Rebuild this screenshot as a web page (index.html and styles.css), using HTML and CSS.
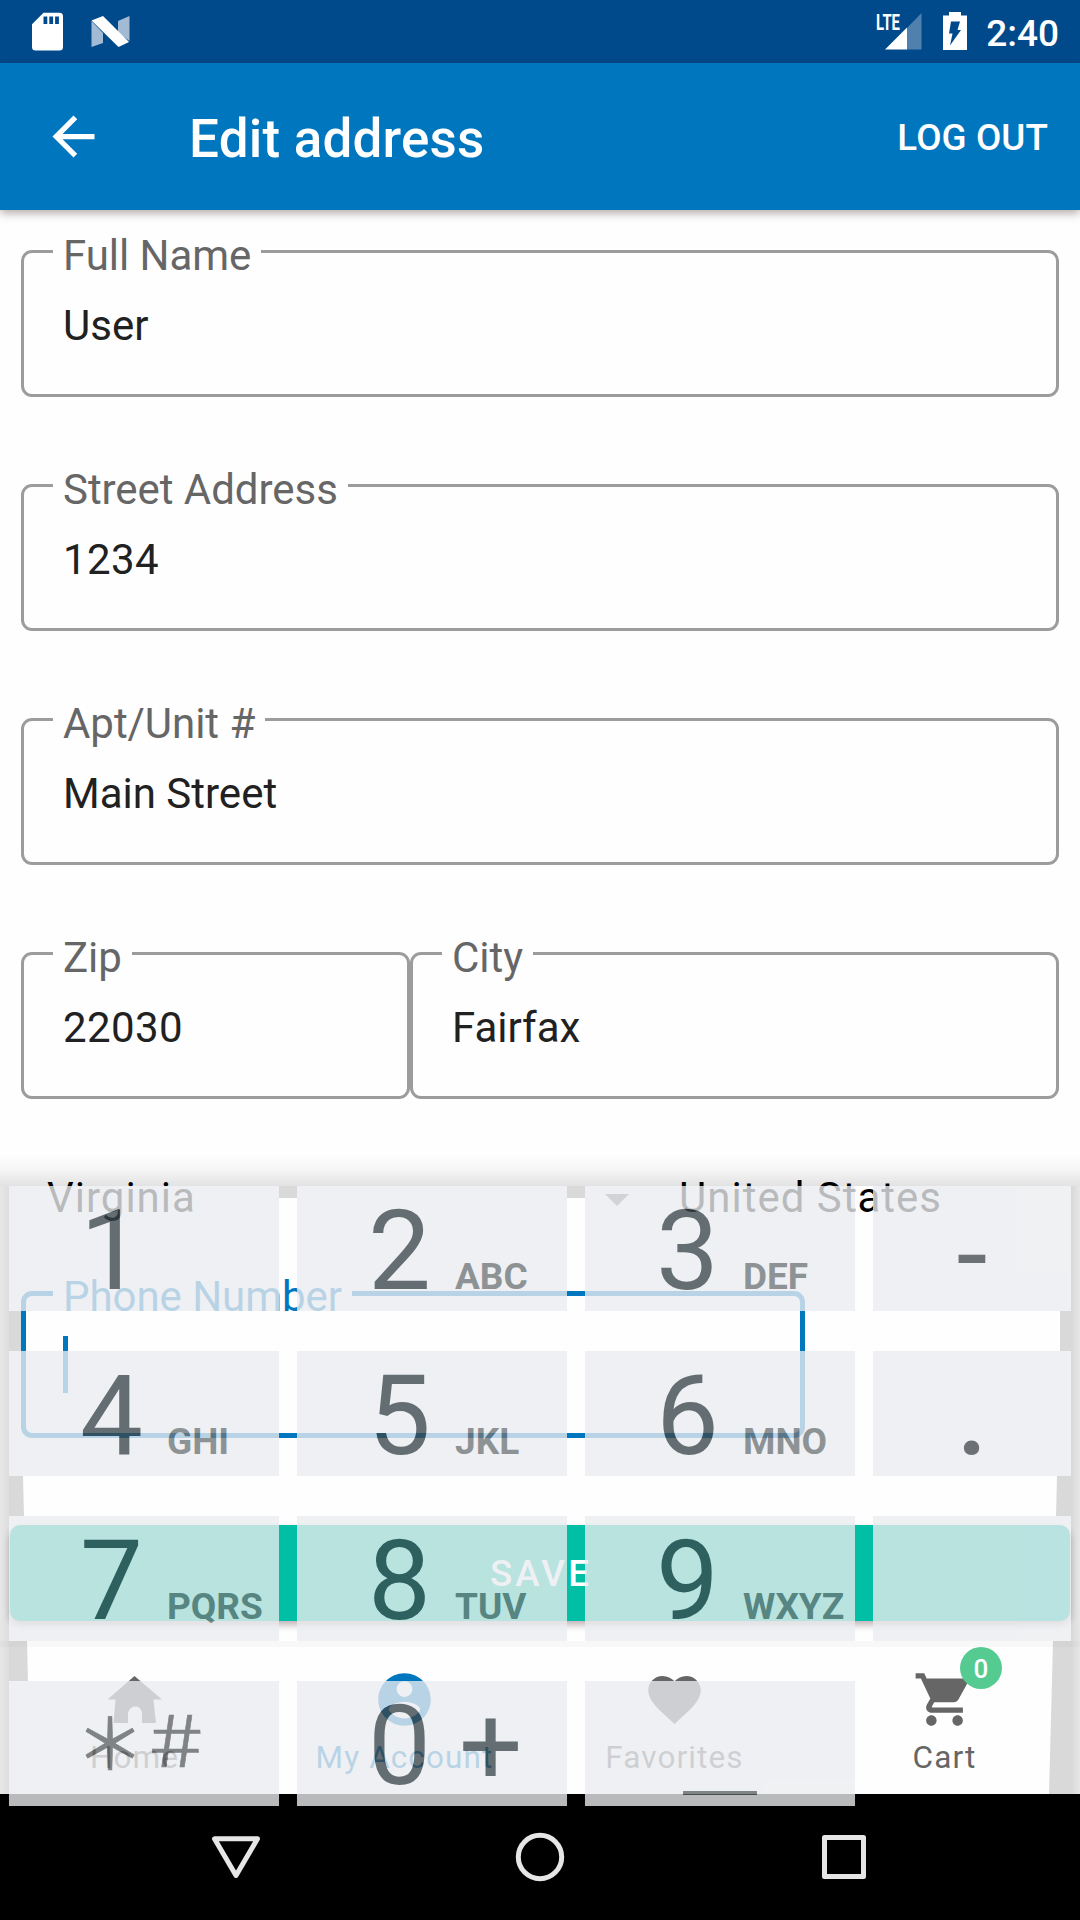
FILE: index.html
```html
<!DOCTYPE html>
<html lang="en">
<head>
<meta charset="utf-8">
<title>Edit address</title>
<link rel="stylesheet" href="styles.css">
</head>
<body>
<div class="screen">
  <header class="status">
    <svg class="status-left" width="140" height="63" viewBox="0 0 140 63">
      <path fill="#fff" d="M43.500 12.700H59.500a3.500 3.500 0 0 1 3.500 3.500V47a3.500 3.500 0 0 1-3.500 3.500H35.500a3.500 3.500 0 0 1-3.500-3.500V24.200z"/>
      <path fill="#004a8c" d="M43.500 16.500h3.800v7.500h-3.800zM49.300 16.500h3.800v7.500h-3.800zM55.100 16.500h3.800v7.500h-3.800z"/>
      <path fill="#a3bad4" d="M91.500 21l11.500 12v10L91.500 47zM118 21l11.500-5v25l-11.500-8z"/>
      <path fill="#fff" d="M91.500 20.500L103 16l26 26-10.500 5z"/>
    </svg>
    <div class="status-right">
      <div class="signal">
        <svg width="48" height="63" viewBox="0 0 48 63">
          <path fill="#4f80ae" d="M47.500 13v36.500H33V28z"/>
          <path fill="#fff" d="M33 27.500v22H11z"/>
        </svg>
        <span class="lte">LTE</span>
      </div>
      <svg class="battery" width="24" height="63" viewBox="0 0 24 63">
        <path fill="#fff" d="M6 12h12v3.500h6V50H0V15.500h6z"/>
        <path fill="#004a8c" d="M8 21.500h9l-2.500 8.500h3.500L7 45.500l2.500-12H6z"/>
      </svg>
      <span class="clock">2:40</span>
    </div>
  </header>

  <div class="appbar">
    <svg class="back" width="63" height="63" viewBox="0 0 24 24"><path fill="#fff" d="M20 11H7.830l5.590-5.590L12 4l-8 8 8 8 1.410-1.410L7.830 13H20v-2z"/></svg>
    <h1 class="title">Edit address</h1>
    <span class="logout">LOG OUT</span>
  </div>

  <main class="form">
    <div class="field"><label class="label">Full Name</label><span class="value">User</span></div>
    <div class="field"><label class="label">Street Address</label><span class="value number">1234</span></div>
    <div class="field"><label class="label">Apt/Unit #</label><span class="value">Main Street</span></div>
    <div class="row">
      <div class="field zip"><label class="label">Zip</label><span class="value number">22030</span></div>
      <div class="field city"><label class="label">City</label><span class="value">Fairfax</span></div>
    </div>
    <div class="selects">
      <div class="select state"><span>Virginia</span><svg width="24" height="12" viewBox="0 0 24 12"><path fill="#757575" d="M0 0h24L12 12z"/></svg></div>
      <div class="select country"><span>United States</span></div>
    </div>
    <div class="field phone"><label class="label">Phone Number</label><i class="caret"></i></div>
    <div class="save">SAVE</div>
  </main>

  <nav class="tabs">
    <div class="tab">
      <svg width="63" height="63" viewBox="0 0 63 63"><path fill="#666" d="M31.500 8L59 31.500H50.500L53 55H39V46c0-10-13-10-14 0v9H10.500l2-23.500H4.500z"/></svg>
      <span>Home</span>
    </div>
    <div class="tab active">
      <svg width="63" height="63" viewBox="0 0 24 24"><path fill="#0076bf" d="M12 2C6.480 2 2 6.480 2 12s4.480 10 10 10 10-4.480 10-10S17.520 2 12 2zm0 3c1.660 0 3 1.340 3 3s-1.340 3-3 3-3-1.340-3-3 1.340-3 3-3zm0 14.200c-2.500 0-4.710-1.280-6-3.220.03-1.990 4-3.080 6-3.080 1.990 0 5.970 1.090 6 3.080-1.290 1.940-3.500 3.220-6 3.220z"/></svg>
      <span>My Account</span>
    </div>
    <div class="tab">
      <svg width="63" height="63" viewBox="0 0 24 24"><path fill="#666" d="M12 21.350l-1.450-1.320C5.400 15.360 2 12.280 2 8.500 2 5.420 4.420 3 7.500 3c1.740 0 3.410.81 4.500 2.090C13.090 3.810 14.760 3 16.500 3 19.580 3 22 5.420 22 8.500c0 3.780-3.400 6.860-8.550 11.540L12 21.350z"/></svg>
      <span>Favorites</span>
    </div>
    <div class="tab">
      <svg width="63" height="63" viewBox="0 0 24 24"><path fill="#666" d="M7 18c-1.100 0-1.990.9-1.990 2S5.900 22 7 22s2-.9 2-2-.9-2-2-2zM1 2v2h2l3.600 7.590-1.350 2.450c-.16.28-.25.61-.25.960 0 1.100.9 2 2 2h12v-2H7.420c-.14 0-.25-.11-.25-.25l.03-.12.9-1.630h7.450c.75 0 1.410-.41 1.750-1.030l3.580-6.490c.08-.14.12-.31.12-.48 0-.55-.45-1-1-1H5.210l-.94-2H1zm16 16c-1.100 0-1.990.9-1.990 2s.89 2 1.990 2 2-.9 2-2-.9-2-2-2z"/></svg>
      <span>Cart</span>
      <b class="badge">0</b>
    </div>
  </nav>

  <footer class="sysnav">
    <svg width="1080" height="126" viewBox="0 0 1080 126" fill="none" stroke="#e6e6e6" stroke-width="5" stroke-linejoin="round">
      <path d="M214.500 44.800H257.500L236 81.500z"/>
      <circle cx="540" cy="63" r="21.700"/>
      <rect x="824.500" y="43.500" width="39" height="39"/>
    </svg>
  </footer>

  <!-- shadow cast by the keyboard panel, visible round the keys -->
  <svg class="panel-shadow" width="1080" height="640" viewBox="0 0 1080 640">
    <defs>
      <linearGradient id="top" x1="0" y1="0" x2="0" y2="1"><stop offset="0" stop-opacity="0"/><stop offset=".5" stop-opacity=".035"/><stop offset="1" stop-opacity=".11"/></linearGradient>
      <linearGradient id="left"><stop offset="0" stop-opacity=".09"/><stop offset="1" stop-opacity=".13"/></linearGradient>
      <linearGradient id="right"><stop offset="0" stop-opacity=".15"/><stop offset="1" stop-opacity=".09"/></linearGradient>
    </defs>
    <rect y="0" width="1080" height="32" fill="url(#top)"/>
    <rect y="32" width="9" height="608" fill="url(#left)"/>
    <rect x="1071" y="32" width="9" height="608" fill="url(#right)"/>
    <g fill-opacity=".145">
      <path d="M279 32h18v12h-18zM567 32h18v12h-18z"/>
      <path d="M9 157h12v40H9zM9 322h14l1 40H9zM9 487h18l1 40H9z"/>
      <path d="M1060 157h11v40h-11zM1057 322h14v40h-15zM1053 487h18v153h-22z"/>
    </g>
  </svg>

  <!-- numeric keyboard sliding in over the page -->
  <section class="keypad">
    <div class="key"><span class="digit">1</span></div>
    <div class="key"><span class="digit">2</span><span class="letters">ABC</span></div>
    <div class="key"><span class="digit">3</span><span class="letters">DEF</span></div>
    <div class="key sign minus">-</div>
    <div class="key"><span class="digit">4</span><span class="letters">GHI</span></div>
    <div class="key"><span class="digit">5</span><span class="letters">JKL</span></div>
    <div class="key"><span class="digit">6</span><span class="letters">MNO</span></div>
    <div class="key sign">.</div>
    <div class="key"><span class="digit">7</span><span class="letters">PQRS</span></div>
    <div class="key"><span class="digit">8</span><span class="letters">TUV</span></div>
    <div class="key"><span class="digit">9</span><span class="letters">WXYZ</span></div>
    <div class="key"></div>
    <div class="key symbols"><span class="star">＊</span><span class="hash">#</span></div>
    <div class="key"><span class="digit zero">0</span><span class="digit">+</span></div>
    <div class="key space"><i class="spacebar"></i></div>
  </section>
</div>
</body>
</html>
```
FILE: styles.css
```css
* { box-sizing: border-box; }

body {
  margin: 0;
  font-family: Roboto, "Liberation Sans", sans-serif;
  background: #fefefe;
}

.screen {
  position: relative;
  display: flex;
  flex-direction: column;
  width: 1080px;
  height: 1920px;
  overflow: hidden;
}

.status {
  display: flex;
  justify-content: space-between;
  flex: none;
  height: 63px;
  padding-right: 21px;
  background: #004a8c;
  color: #fff;
}

.status-right { display: flex; }
.signal { position: relative; margin-right: 21px; }

.lte {
  position: absolute;
  left: 2px;
  top: 12px;
  font-size: 22.500px;
  font-weight: 700;
  line-height: 20px;
  transform: scaleX(.66);
  transform-origin: left;
}

.clock {
  margin-left: 19px;
  font-size: 37px;
  font-weight: 500;
  line-height: 67px;
}

.appbar {
  position: relative;
  z-index: 1;
  display: flex;
  align-items: center;
  flex: none;
  height: 147px;
  padding: 0 32px 0 42px;
  background: #0076bf;
  box-shadow: 0 3px 9px rgba(40, 0, 0, .35);
  color: #fff;
}

.title {
  flex: 1;
  margin: 4px 0 0 84px;
  font-size: 53px;
  font-weight: 500;
  line-height: 60px;
  letter-spacing: .2px;
}

.logout {
  margin-top: 1px;
  font-size: 36.750px;
  font-weight: 500;
  letter-spacing: .1px;
}

.form {
  display: flex;
  flex-direction: column;
  flex: none;
  height: 1431px;
  padding: 40px 21px 0;
}

.field {
  position: relative;
  flex: none;
  height: 147px;
  margin-bottom: 87px;
  padding: 48px 0 0 39px;
  border: 3px solid #9c9c9c;
  border-radius: 11px;
  font-size: 42px;
  line-height: 50px;
  color: #212121;
}

.number { letter-spacing: .4px; }

.label {
  position: absolute;
  left: 29px;
  top: -22px;
  padding: 0 10px;
  background: #fefefe;
  line-height: 50px;
  letter-spacing: -.05px;
  color: #666;
  white-space: nowrap;
}

.row { display: flex; }
.zip { width: 389px; }
.city { flex: 1; }

.selects {
  display: flex;
  flex: none;
  height: 118px;
  margin-top: -13px;
  font-size: 42px;
  line-height: 50px;
  letter-spacing: 1px;
  color: #000;
}

.select { display: flex; justify-content: space-between; }
.state { width: 608px; padding-left: 26px; }
.state svg { margin-top: 21px; }
.country { padding-left: 50px; }

.phone {
  width: 784px;
  margin-bottom: 87px;
  border: 5px solid #0076bf;
}

.phone .label { left: 27px; top: -24px; color: #0076bf; }

.caret {
  position: absolute;
  left: 37px;
  top: 40px;
  width: 5px;
  height: 57px;
  background: #0076bf;
}

.save {
  flex: none;
  height: 96px;
  margin: 0 -11px;
  border-radius: 10px;
  background: #00bfa5;
  box-shadow: 0 4px 7px rgba(40, 0, 20, .3);
  font-size: 36.750px;
  font-weight: 500;
  line-height: 98px;
  letter-spacing: 3.100px;
  text-indent: 2px;
  text-align: center;
  color: #fff;
}

.tabs {
  display: grid;
  grid-template-columns: repeat(4, 1fr);
  flex: none;
  height: 153px;
  border-top: 6px solid #f8f8f8;
  background: #fefefe;
}

.tab {
  position: relative;
  display: flex;
  flex-direction: column;
  align-items: center;
  padding: 21px 1px 0 0;
  font-size: 31.500px;
  line-height: 38px;
  letter-spacing: 1.100px;
  color: #666;
}

.tab span { margin-top: 8px; }
.active { color: #0076bf; }

.badge {
  position: absolute;
  left: 150px;
  top: 0;
  width: 42px;
  height: 42px;
  border-radius: 50%;
  background: #55cb92;
  font-size: 26px;
  font-weight: 500;
  line-height: 44px;
  letter-spacing: 0;
  text-align: center;
  color: #fff;
}

.sysnav { flex: none; height: 126px; background: #000; }

.panel-shadow { position: absolute; left: 0; top: 1154px; }

.keypad {
  position: absolute;
  left: 9px;
  top: 1186px;
  display: grid;
  grid-template-columns: 270px 270px 270px 198px;
  grid-auto-rows: 125px;
  gap: 40px 18px;
  opacity: .785;
  color: #3b474c;
}

.key {
  position: relative;
  display: flex;
  align-items: baseline;
  padding: 9px 0 0 71px;
  background: #ebedf0;
  font-size: 112px;
  line-height: 112px;
  white-space: nowrap;
}

.digit { width: 87px; }
.zero { width: 91px; }

.letters {
  font-size: 37px;
  font-weight: 700;
  line-height: 40px;
  color: #6f7678;
}

.sign {
  justify-content: center;
  padding-left: 0;
  font-weight: 500;
  color: #444b50;
}

.minus { padding-top: 13px; font-weight: 400; }

.symbols { align-items: flex-start; padding-left: 0; color: #5e6265; }

.star {
  margin-left: 66px;
  font-family: "Noto Sans CJK JP", sans-serif;
  font-size: 70px;
  line-height: 100px;
  -webkit-text-stroke: .6px #5e6265;
}

.hash {
  margin-left: 8px;
  font-size: 73px;
  font-weight: 300;
  line-height: 105px;
  transform: scaleX(1.240) skewX(4deg);
  -webkit-text-stroke: .5px #5e6265;
}

.spacebar {
  position: absolute;
  left: 98px;
  top: 110px;
  width: 74px;
  height: 4px;
  background: #5b6464;
}
```
